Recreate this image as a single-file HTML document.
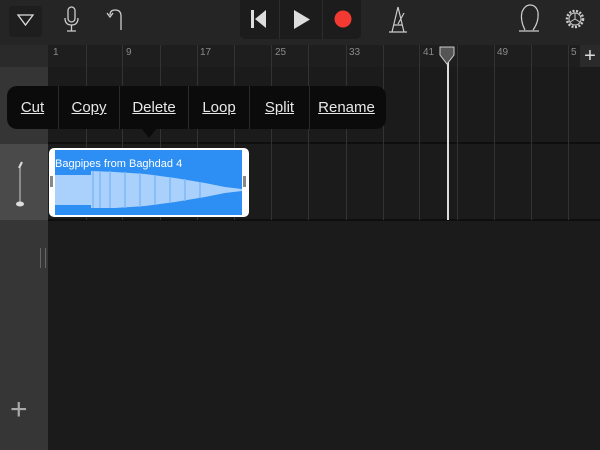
<!DOCTYPE html><html><head><style>
*{margin:0;padding:0;box-sizing:border-box}
body{width:600px;height:450px;overflow:hidden;background:#1b1b1b;position:relative;font-family:"Liberation Sans",sans-serif}
.a{position:absolute}
.v{position:absolute;width:1px;background:#333}
.m{position:absolute;top:86px;height:43px;line-height:43px;color:#e8e8e8;font-size:15px;text-decoration:underline;text-align:center}
.n{position:absolute;font-size:10px;color:#8a8a8a;top:47px}
</style></head><body>
<div class="a" style="left:0;top:0;width:600px;height:45px;background:#252525"></div>
<div class="a" style="left:9px;top:6px;width:33px;height:31px;background:#1e1e1e;border-radius:3px"></div>
<svg class="a" style="left:0;top:0" width="600" height="45">
<path d="M18 15 L33 15 L25.5 25 Z" fill="none" stroke="#ddd" stroke-width="1.3"/>
<rect x="68" y="7" width="7" height="15" rx="3.5" fill="none" stroke="#ccc" stroke-width="1.3"/>
<path d="M65 18 Q65 25 71.5 25 Q78 25 78 18 M71.5 25 V31 M67 31 H76" fill="none" stroke="#ccc" stroke-width="1.3"/>
<path d="M121 30 V16 Q121 10 115 10 Q110 10 110 15 M107 13 L110 17 L113 13" fill="none" stroke="#ccc" stroke-width="1.3"/>
</svg>
<div class="a" style="left:240px;top:0;width:121px;height:39px;background:#1c1c1c;border-radius:0 0 5px 5px"></div>
<div class="a" style="left:279px;top:0;width:1px;height:39px;background:#2c2c2c"></div>
<div class="a" style="left:322px;top:0;width:1px;height:39px;background:#2c2c2c"></div>
<svg class="a" style="left:0;top:0" width="600" height="45">
<rect x="251" y="10" width="3" height="18" fill="#ddd"/><path d="M266 10 V28 L255 19Z" fill="#ddd"/>
<path d="M294 10 V29 L310 19.5Z" fill="#ddd"/>
<circle cx="343" cy="19" r="8.5" fill="#f23a33"/>
<path d="M392 32 L398 7 L404 32 Z M389 32 H407 M394 25 H402 M398 24 L404 13" fill="none" stroke="#ccc" stroke-width="1.2"/>
<path d="M525 30 Q520 20 522 12 Q525 5 530 5 Q536 5 538 12 Q539 22 533 30 M519 31 H539" fill="none" stroke="#ccc" stroke-width="1.2"/>
<circle cx="575" cy="19" r="8" fill="none" stroke="#ccc" stroke-width="2.5" stroke-dasharray="2 1.5"/>
<circle cx="575" cy="19" r="6" fill="none" stroke="#ccc" stroke-width="1"/>
<path d="M575 19 L575 13 M575 19 L580 22 M575 19 L570 22" stroke="#ccc"/>
</svg>
<div class="a" style="left:0;top:45px;width:48px;height:22px;background:#2a2a2a"></div>
<div class="a" style="left:48px;top:45px;width:552px;height:22px;background:#1e1e1e"></div>
<div class="a" style="left:0;top:67px;width:48px;height:77px;background:#353535"></div>
<div class="a" style="left:0;top:144px;width:48px;height:76px;background:#4a4a4a"></div>
<div class="a" style="left:0;top:220px;width:48px;height:230px;background:#363636"></div>
<div class="a" style="left:48px;top:67px;width:552px;height:383px;background:#1b1b1b"></div>
<div class="a" style="left:48px;top:142px;width:552px;height:2px;background:#0e0e0e"></div>
<div class="a" style="left:48px;top:219px;width:552px;height:2px;background:#0e0e0e"></div>
<div class="v" style="left:86px;top:45px;height:175px"></div><div class="v" style="left:122px;top:45px;height:175px"></div>
<div class="v" style="left:160px;top:45px;height:175px"></div><div class="v" style="left:197px;top:45px;height:175px"></div>
<div class="v" style="left:234px;top:45px;height:175px"></div><div class="v" style="left:271px;top:45px;height:175px"></div>
<div class="v" style="left:308px;top:45px;height:175px"></div><div class="v" style="left:346px;top:45px;height:175px"></div>
<div class="v" style="left:383px;top:45px;height:175px"></div><div class="v" style="left:419px;top:45px;height:175px"></div>
<div class="v" style="left:457px;top:45px;height:175px"></div><div class="v" style="left:494px;top:45px;height:175px"></div>
<div class="v" style="left:531px;top:45px;height:175px"></div><div class="v" style="left:568px;top:45px;height:175px"></div>
<span class="n" style="left:53px">1</span><span class="n" style="left:126px">9</span><span class="n" style="left:200px">17</span>
<span class="n" style="left:275px">25</span><span class="n" style="left:349px">33</span><span class="n" style="left:423px">41</span>
<span class="n" style="left:497px">49</span><span class="n" style="left:571px">5</span>
<div class="a" style="left:580px;top:45px;width:20px;height:22px;background:#2a2a2a;color:#ddd;font-size:20px;line-height:22px;text-align:center">+</div>
<div class="a" style="left:40px;top:248px;width:6px;height:20px;border-left:1px solid #666;border-right:1px solid #666"></div>
<div class="a" style="left:10px;top:395px;color:#aaa;font-size:30px;font-weight:100;line-height:30px">+</div>
<svg class="a" style="left:10px;top:160px" width="20" height="50"><path d="M10 4 V42" stroke="#ccc" stroke-width="1"/><path d="M9 8 L12 2" stroke="#ddd" stroke-width="2"/><ellipse cx="10" cy="44" rx="4" ry="2.5" fill="#ddd"/></svg>
<div class="a" style="left:49px;top:148px;width:200px;height:69px;background:#fff;border-radius:5px"></div>
<div class="a" style="left:55px;top:150px;width:187px;height:65px;background:#2d8ff3"></div>
<svg class="a" style="left:55px;top:150px" width="187" height="65"><path d="M0 25 H36 V21 L60 22 L90 24 L120 28 L150 33 L170 37 L187 39 V41 L170 43 L150 47 L120 52 L90 56 L60 58 L36 58 V55 H0 Z" fill="#a9d1fb"/>
<path d="M38 21 V58 M45 22 V58 M55 21 V58 M70 22 V58 M85 23 V57 M100 25 V55 M115 27 V53 M130 29 V51 M145 32 V48" stroke="#7fb8f8" stroke-width="1.5"/></svg>
<div class="a" style="left:55px;top:158px;color:#fff;font-size:11px">Bagpipes from Baghdad 4</div>
<div class="a" style="left:50px;top:176px;width:3px;height:11px;background:#888"></div>
<div class="a" style="left:243px;top:176px;width:3px;height:11px;background:#888"></div>
<div class="a" style="left:447px;top:62px;width:1.5px;height:158px;background:#ddd"></div>
<svg class="a" style="left:439px;top:46px" width="17" height="20"><path d="M1 1 H15 V9 L8 18 L1 9 Z" fill="#555" stroke="#ccc"/></svg>
<div class="a" style="left:7px;top:86px;width:379px;height:43px;background:#0b0b0b;border-radius:10px"></div>
<div class="a" style="left:141px;top:128px;width:0;height:0;border-left:8px solid transparent;border-right:8px solid transparent;border-top:10px solid #0b0b0b"></div>
<div class="a" style="left:58px;top:86px;width:1px;height:43px;background:#2a2a2a"></div>
<div class="a" style="left:119px;top:86px;width:1px;height:43px;background:#2a2a2a"></div>
<div class="a" style="left:188px;top:86px;width:1px;height:43px;background:#2a2a2a"></div>
<div class="a" style="left:249px;top:86px;width:1px;height:43px;background:#2a2a2a"></div>
<div class="a" style="left:309px;top:86px;width:1px;height:43px;background:#2a2a2a"></div>
<span class="m" style="left:7px;width:51px">Cut</span>
<span class="m" style="left:59px;width:60px">Copy</span>
<span class="m" style="left:120px;width:68px">Delete</span>
<span class="m" style="left:189px;width:60px">Loop</span>
<span class="m" style="left:250px;width:59px">Split</span>
<span class="m" style="left:310px;width:73px">Rename</span>
</body></html>
